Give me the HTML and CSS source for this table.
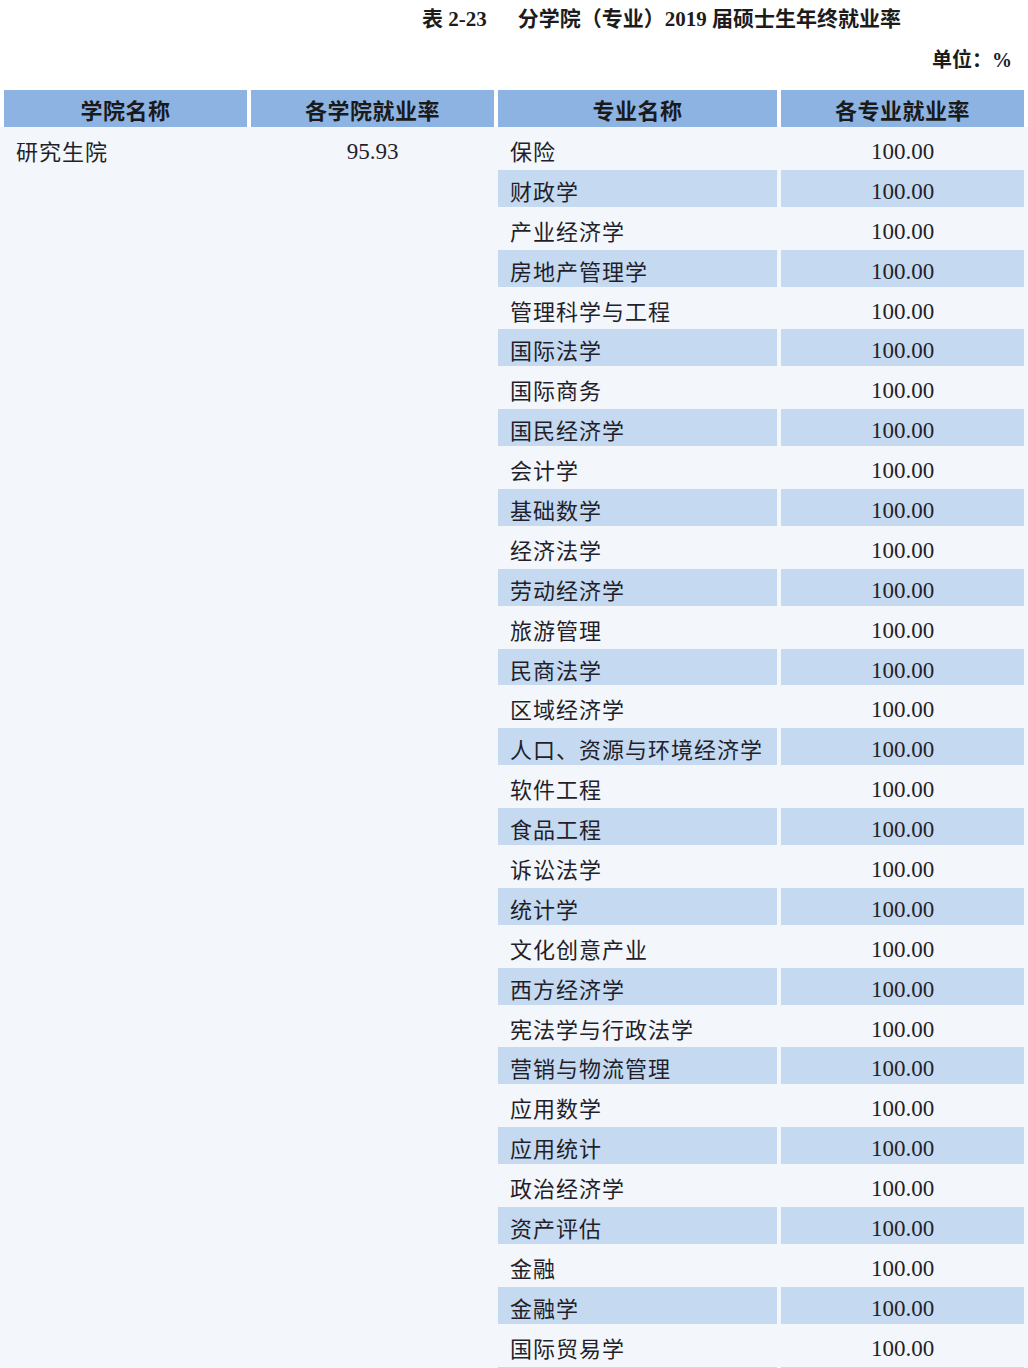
FILE: index.html
```html
<!DOCTYPE html>
<html lang="zh-CN">
<head>
<meta charset="utf-8">
<title>分学院（专业）2019 届硕士生年终就业率</title>
<link rel="stylesheet" href="styles.css">
</head>
<body>
<div class="page">
  <div class="title"><span class="tno">表 2-23</span><span class="tname">分学院（专业）2019 届硕士生年终就业率</span></div>
  <div class="unit">单位：%</div>
  <div class="thead">
    <div class="th">学院名称</div>
    <div class="th">各学院就业率</div>
    <div class="th">专业名称</div>
    <div class="th">各专业就业率</div>
  </div>
  <div class="tbody">
    <div class="college"><div class="cell left">研究生院</div></div>
    <div class="college-rate"><div class="cell center">95.93</div></div>

    <div class="row"><div class="cell major">保险</div><div class="cell rate">100.00</div></div>
    <div class="row alt"><div class="cell major">财政学</div><div class="cell rate">100.00</div></div>
    <div class="row"><div class="cell major">产业经济学</div><div class="cell rate">100.00</div></div>
    <div class="row alt"><div class="cell major">房地产管理学</div><div class="cell rate">100.00</div></div>
    <div class="row"><div class="cell major">管理科学与工程</div><div class="cell rate">100.00</div></div>
    <div class="row alt"><div class="cell major">国际法学</div><div class="cell rate">100.00</div></div>
    <div class="row"><div class="cell major">国际商务</div><div class="cell rate">100.00</div></div>
    <div class="row alt"><div class="cell major">国民经济学</div><div class="cell rate">100.00</div></div>
    <div class="row"><div class="cell major">会计学</div><div class="cell rate">100.00</div></div>
    <div class="row alt"><div class="cell major">基础数学</div><div class="cell rate">100.00</div></div>
    <div class="row"><div class="cell major">经济法学</div><div class="cell rate">100.00</div></div>
    <div class="row alt"><div class="cell major">劳动经济学</div><div class="cell rate">100.00</div></div>
    <div class="row"><div class="cell major">旅游管理</div><div class="cell rate">100.00</div></div>
    <div class="row alt"><div class="cell major">民商法学</div><div class="cell rate">100.00</div></div>
    <div class="row"><div class="cell major">区域经济学</div><div class="cell rate">100.00</div></div>
    <div class="row alt"><div class="cell major">人口、资源与环境经济学</div><div class="cell rate">100.00</div></div>
    <div class="row"><div class="cell major">软件工程</div><div class="cell rate">100.00</div></div>
    <div class="row alt"><div class="cell major">食品工程</div><div class="cell rate">100.00</div></div>
    <div class="row"><div class="cell major">诉讼法学</div><div class="cell rate">100.00</div></div>
    <div class="row alt"><div class="cell major">统计学</div><div class="cell rate">100.00</div></div>
    <div class="row"><div class="cell major">文化创意产业</div><div class="cell rate">100.00</div></div>
    <div class="row alt"><div class="cell major">西方经济学</div><div class="cell rate">100.00</div></div>
    <div class="row"><div class="cell major">宪法学与行政法学</div><div class="cell rate">100.00</div></div>
    <div class="row alt"><div class="cell major">营销与物流管理</div><div class="cell rate">100.00</div></div>
    <div class="row"><div class="cell major">应用数学</div><div class="cell rate">100.00</div></div>
    <div class="row alt"><div class="cell major">应用统计</div><div class="cell rate">100.00</div></div>
    <div class="row"><div class="cell major">政治经济学</div><div class="cell rate">100.00</div></div>
    <div class="row alt"><div class="cell major">资产评估</div><div class="cell rate">100.00</div></div>
    <div class="row"><div class="cell major">金融</div><div class="cell rate">100.00</div></div>
    <div class="row alt"><div class="cell major">金融学</div><div class="cell rate">100.00</div></div>
    <div class="row"><div class="cell major">国际贸易学</div><div class="cell rate">100.00</div></div>
    <div class="row alt"><div class="cell major"></div><div class="cell rate"></div></div>
  </div>
</div>
</body>
</html>
```
FILE: styles.css
```css
html, body {
  margin: 0;
  padding: 0;
  background: #ffffff;
}

body {
  width: 1028px;
  height: 1368px;
  overflow: hidden;
  font-family: "Liberation Serif", "Noto Sans CJK SC", serif;
  color: #231f2a;
}

.page {
  width: 1028px;
}

.title {
  display: flex;
  height: 38px;
  line-height: 38px;
  padding-left: 422px;
  font-size: 21px;
  font-weight: 700;
  color: #1c1c1c;
  white-space: nowrap;
}

.tname {
  margin-left: 31px;
}

.unit {
  margin-top: 3px;
  height: 38px;
  line-height: 38px;
  text-align: right;
  padding-right: 16px;
  font-size: 20px;
  font-weight: 700;
  color: #1c1c1c;
}

.thead {
  margin-top: 11px;
  display: grid;
  grid-template-columns: 243px 243px 279px 243px;
  column-gap: 4px;
  padding-left: 4px;
  height: 37px;
}

.th {
  background: #8db3e2;
  display: flex;
  align-items: center;
  justify-content: center;
  padding-top: 1px;
  box-sizing: border-box;
  font-size: 22px;
  font-weight: 700;
  color: #1a1a1a;
  letter-spacing: 0.5px;
}

.tbody {
  background: #f3f6fb;
  padding: 3px 0 0 4px;
  display: grid;
  grid-template-columns: 243px 243px 279px 243px;
  grid-auto-rows: 36.9px;
  column-gap: 4px;
  row-gap: 3px;
}

.college {
  grid-column: 1;
  grid-row: 1 / span 32;
}

.college-rate {
  grid-column: 2;
  grid-row: 1 / span 32;
}

.row {
  display: contents;
}

.cell {
  height: 36.9px;
  display: flex;
  align-items: center;
  padding-top: 7px;
  box-sizing: border-box;
  font-size: 23px;
  white-space: nowrap;
}

.left {
  padding-left: 12px;
}

.center {
  justify-content: center;
}

.major {
  grid-column: 3;
  padding-left: 12px;
  padding-top: 3px;
  font-size: 22px;
  letter-spacing: 1px;
}

.rate {
  grid-column: 4;
  justify-content: center;
}

.college .cell.left {
  padding-top: 3px;
  font-size: 22px;
  letter-spacing: 1px;
}

.row.alt .cell {
  background: #c5d9f1;
}
```
